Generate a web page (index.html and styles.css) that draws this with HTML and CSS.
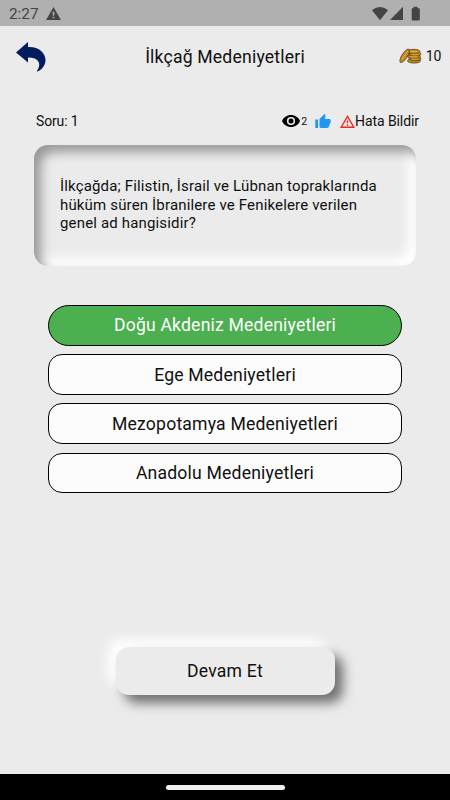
FILE: index.html
```html
<!DOCTYPE html>
<html lang="tr">
<head>
<meta charset="utf-8">
<title>İlkçağ Medeniyetleri</title>
<link rel="stylesheet" href="styles.css">
</head>
<body>
<div class="status">
  <span class="clock">2:27</span>
  <svg class="alert" viewBox="0 0 16 14"><path fill="#444" d="M8 0 16 14H0Z"/><path fill="#b0b0b0" d="M7.1 4.8h1.8v4.4H7.1zM7.1 10.4h1.8v1.8H7.1z"/></svg>
  <svg class="signals" viewBox="0 0 50 16"><g fill="#444"><path d="M1 4.3Q9-2.2 17 4.3L9 14.3Z"/><path d="M32 .8V14H19Z"/><path d="M42.5.8h4v1.500H48q.8 0 .8.8v10.500q0 .8-.8.8h-6.500q-.8 0-.8-.8V3.100q0-.8.8-.8h1z"/></g></svg>
</div>
<header class="appbar">
  <svg class="back" viewBox="0 0 30 30"><path fill="#031c60" d="M0 10.500 12 0V5C23 4.500 29.500 11 29.500 18 29.500 23.500 26 27.500 21.500 29.500 20.500 29.500 21 28.500 21.500 28 25.500 22 23 15.500 12 15.500V20.500Z"/></svg>
  <h1>İlkçağ Medeniyetleri</h1>
  <div class="coins">
    <svg viewBox="0 0 22 16">
      <g fill="#c28a20" stroke="#493414" stroke-width=".7">
        <ellipse cx="14.500" cy="12.800" rx="6.500" ry="2.300"/><ellipse cx="15.500" cy="10.600" rx="6" ry="2.200"/><ellipse cx="14.500" cy="8.300" rx="6.400" ry="2.200"/><ellipse cx="15.500" cy="6" rx="6" ry="2.200"/><ellipse cx="14.300" cy="3.600" rx="6.200" ry="2.300"/>
        <ellipse cx="5.200" cy="7.800" rx="2.700" ry="7.800" transform="rotate(33 5.200 7.800)"/>
      </g>
      <path d="M2 12 8 3.200M10.500 3.500h7M12 6.400h7M11 8.700h7M12 11h6" stroke="#e4b748" stroke-width=".8" fill="none"/>
    </svg>
    <span>10</span>
  </div>
</header>
<main>
  <div class="meta">
    <span class="number">Soru: 1</span>
    <svg class="eye" viewBox="0 0 18 12"><path d="M9 0C4.900 0 1.400 2.500 0 6c1.400 3.500 4.900 6 9 6s7.600-2.500 9-6c-1.400-3.500-4.900-6-9-6z"/><circle cx="9" cy="6" r="4.100" fill="#ebebeb"/><circle cx="9" cy="6" r="2.500"/></svg>
    <span class="views">2</span>
    <svg class="like" viewBox="1 1 22 20"><path fill="#2196f3" d="M1 21h4V9H1v12zm22-11c0-1.100-.9-2-2-2h-6.310l.95-4.570.03-.32c0-.41-.17-.79-.44-1.060L14.170 1 7.590 7.590C7.220 7.950 7 8.450 7 9v10c0 1.100.9 2 2 2h9c.83 0 1.540-.5 1.840-1.220l3.020-7.050c.09-.23.14-.47.14-.73v-2z"/></svg>
    <svg class="warn" viewBox="1 2 22 19"><path fill="#f3261d" d="M12 5.990 19.530 19H4.470L12 5.990M12 2 1 21h22L12 2zm1 14h-2v2h2v-2zm0-6h-2v4h2v-4z"/></svg>
    <span class="report">Hata Bildir</span>
  </div>
  <section class="question">
    <p>İlkçağda; Filistin, İsrail ve Lübnan topraklarında<br>hüküm süren İbranilere ve Fenikelere verilen<br>genel ad hangisidir?</p>
  </section>
  <div class="answers">
    <button class="correct">Doğu Akdeniz Medeniyetleri</button>
    <button>Ege Medeniyetleri</button>
    <button>Mezopotamya Medeniyetleri</button>
    <button>Anadolu Medeniyetleri</button>
  </div>
  <button class="next">Devam Et</button>
</main>
<footer><div class="handle"></div></footer>
</body>
</html>
```

FILE: styles.css
```css
* { box-sizing: border-box; }
body {
  margin: 0;
  height: 800px;
  display: flex;
  flex-direction: column;
  background: #ebebeb;
  color: #101010;
  font-family: Roboto, sans-serif;
  overflow: hidden;
}
svg { display: block; flex: none; }
.status {
  height: 26px;
  flex: none;
  display: flex;
  align-items: center;
  padding: 1px 29px 0 9px;
  background: #b0b0b0;
}
.clock { font-size: 15.300px; line-height: 18px; color: #444; width: 30px; white-space: nowrap; }
.alert { width: 15px; height: 13px; margin-left: 7px; }
.signals { width: 50px; height: 16px; margin-left: auto; }
.appbar {
  height: 62px;
  flex: none;
  display: grid;
  grid-template-columns: 100px 250px 100px;
  align-items: center;
}
.back { width: 30px; height: 30px; margin-left: 15.500px; }
h1 { margin: 0; font-size: 17.600px; font-weight: 400; line-height: 22px; letter-spacing: .19px; text-align: center; white-space: nowrap; }
.coins { display: flex; align-items: center; justify-content: flex-end; gap: 4px; padding: 0 9px 2px 0; font-size: 14px; letter-spacing: -.3px; }
.coins svg { width: 23px; height: 16px; }
main { flex: 1; display: flex; flex-direction: column; }
.meta {
  height: 20px;
  margin: 23px 31px 0 36px;
  display: flex;
  align-items: center;
  font-size: 14px;
  letter-spacing: -.08px;
  white-space: nowrap;
}
.number { margin-right: auto; letter-spacing: -.15px; }
.number, .report { line-height: 16px; margin-bottom: 1px; }
.eye { width: 18px; height: 12px; }
.views { font-size: 10.500px; margin-left: 1px; }
.like { width: 16px; height: 14px; margin-left: 8px; }
.warn { width: 15px; height: 13px; margin: 0 0 0 9px; }
.question {
  height: 121px;
  flex: none;
  margin: 13.500px 34px 0;
  padding: 32.500px 26px 0;
  border-radius: 14px;
  box-shadow: inset 7px 7px 11px #999, inset -8px -8px 11px #fff;
}
.question p { margin: 0; font-size: 15px; line-height: 18.700px; letter-spacing: .16px; white-space: nowrap; }
.answers { display: flex; flex-direction: column; gap: 8.500px; margin: 39.500px 48px 0; }
button { font-family: inherit; color: inherit; padding: 0; }
.answers button {
  height: 40.700px;
  border: 1.300px solid #000;
  border-radius: 14px;
  background: #fcfcfc;
  font-size: 17.600px;
  letter-spacing: .19px;
}
.answers .correct { border-radius: 21px; background: #4caf50; color: #fff; }
.next {
  width: 219px;
  height: 48px;
  margin: 153.500px auto 0;
  border: 0;
  border-radius: 13px;
  background: #ebebeb;
  font-size: 17.600px;
  letter-spacing: .2px;
  box-shadow: 8px 8px 12px #707070, -8px -8px 12px #fff;
}
footer { height: 26px; flex: none; display: flex; align-items: center; justify-content: center; background: #000; }
.handle { width: 119px; height: 5px; border-radius: 3px; background: #f0f0f0; }
```
